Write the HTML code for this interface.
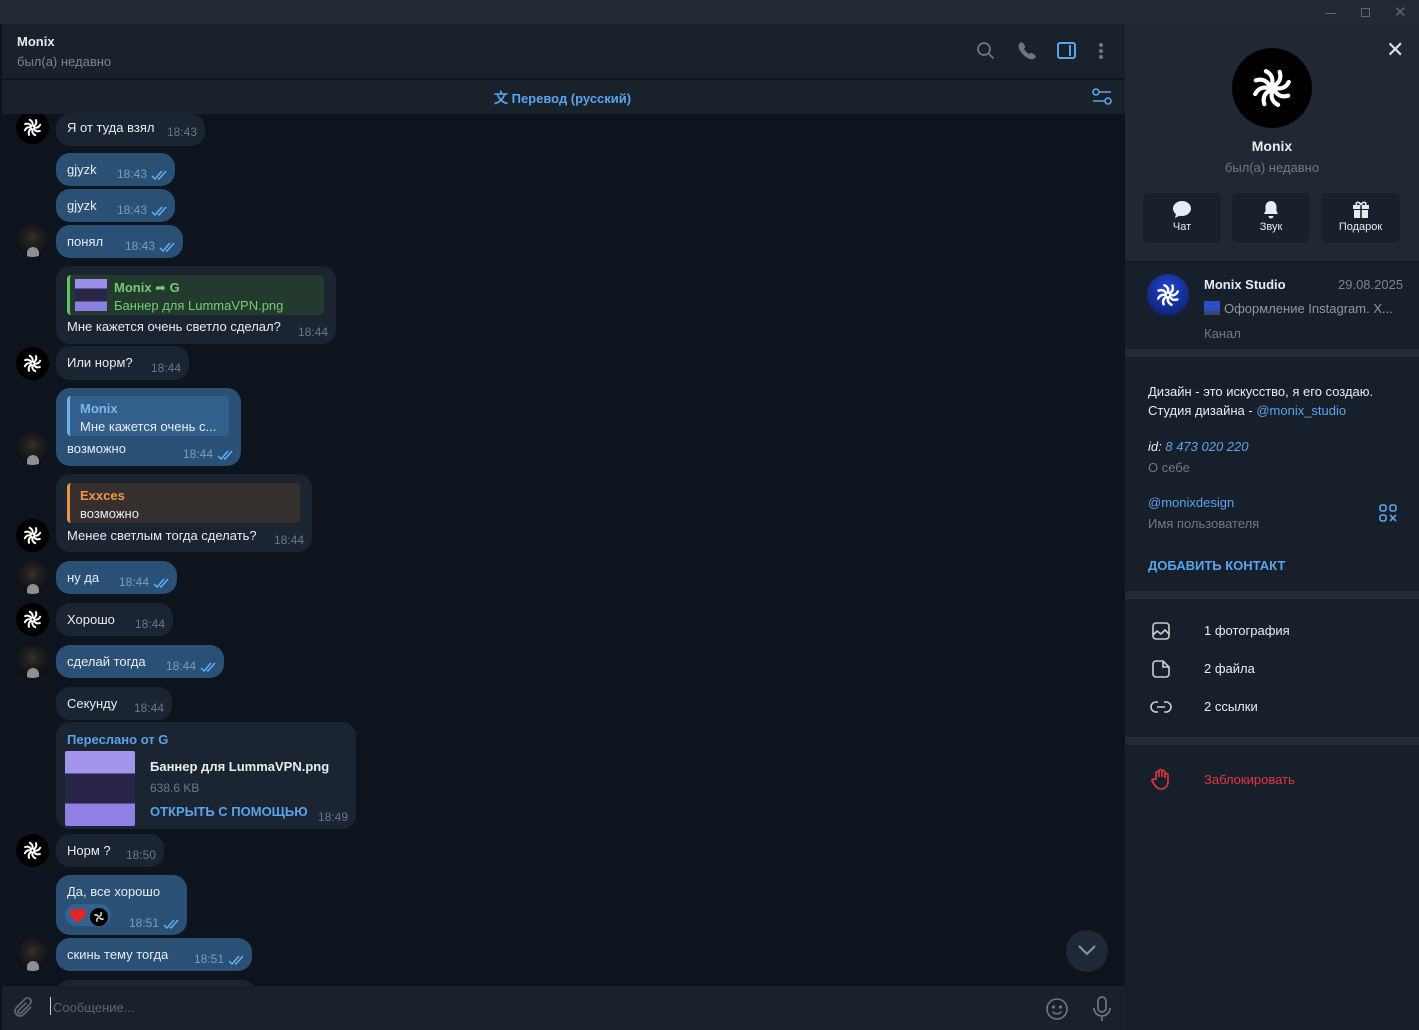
<!DOCTYPE html>
<html><head><meta charset="utf-8">
<style>
*{box-sizing:border-box;margin:0;padding:0}
body{width:1419px;height:1030px;overflow:hidden;background:#0e141d;font-family:"Liberation Sans","DejaVu Sans",sans-serif;font-size:13px;color:#e8ecf0;position:relative}
.abs{position:absolute}
.top{left:0;top:0;width:1419px;height:24px;background:#222a35}
.hdr{left:2px;top:24px;width:1123px;height:55px;background:#19212b;border-bottom:1px solid #111820}
.tr{left:2px;top:80px;width:1123px;height:34px;background:#19212b}
.chat{left:2px;top:114px;width:1123px;height:872px;background:#0e141d;overflow:hidden}
.inp{left:2px;top:986px;width:1123px;height:44px;background:#19212b}
.rp{left:1125px;top:24px;width:294px;height:1006px;background:#17202a}
.b{position:absolute;left:54px;border-radius:14px;padding:0 11px;line-height:16px;white-space:nowrap}
.in{background:#1b2431}
.out{background:#2b5075}
.t{font-size:12px;color:#6b7886;position:absolute;right:8px;bottom:4px}
.out .t{color:#7b9dbd;right:28px}
.ck{position:absolute;right:7px;bottom:6px}
.av{position:absolute;left:14px;width:33px;height:33px;border-radius:50%}
.mx{background:#000}
.ph{background:radial-gradient(circle at 50% 40%,#3a302b 0,#24211f 25%,#14181c 50%,#0c0f13 75%),#0c0f13;overflow:hidden}
.ph:after{content:"";position:absolute;left:11px;top:23px;width:12px;height:10px;border-radius:6px 6px 0 0;background:#8c9094}
.rq{border-radius:4px;padding:4px 8px 4px 10px;border-left:3px solid}
</style></head><body>
<div class="abs top">
<div class="abs" style="left:1325px;top:13px;width:11px;height:1px;background:#5e6874"></div>
<div class="abs" style="left:1361px;top:8px;width:9px;height:9px;border:1px solid #5e6874"></div>
<div class="abs" style="left:1394px;top:3px;color:#5e6874;font-size:15px">✕</div>
</div>
<div class="abs hdr">
<div class="abs" style="left:15px;top:10px;font-weight:bold;font-size:13px">Monix</div>
<div class="abs" style="left:15px;top:30px;color:#7a8591;font-size:13px">был(а) недавно</div>
<svg class="abs" style="left:974px;top:17px" width="20" height="20" viewBox="0 0 20 20" fill="none" stroke="#6d7782" stroke-width="1.8"><circle cx="8" cy="8" r="6"/><path d="M12.5 12.5l5 5"/></svg>
<svg class="abs" style="left:1015px;top:17px" width="20" height="20" viewBox="0 0 20 20"><path d="M3 2c1-1 2-1 3 0l2 3c.5 1 0 2-1 2.5 1 2.5 3 4.5 5.5 5.5.5-1 1.5-1.5 2.5-1l3 2c1 1 1 2 0 3-3 3-9 0-12.5-4S0 5 3 2z" fill="#6d7782"/></svg>
<div class="abs" style="left:1055px;top:18px;width:19px;height:17px;border:2px solid #5aa4ec;border-radius:3px"><div class="abs" style="right:3px;top:1px;width:2px;height:11px;background:#5aa4ec"></div></div>
<div class="abs" style="left:1097px;top:19px;width:4px;height:4px;border-radius:2px;background:#6d7782;box-shadow:0 6px 0 #6d7782,0 12px 0 #6d7782"></div>
</div>
<div class="abs tr">
<div class="abs" style="left:492px;top:8px;color:#5aa4ec;font-weight:bold;font-size:13px"><span style="font-size:14px">文</span> Перевод (русский)</div>
<svg class="abs" style="left:1089px;top:7px" width="22" height="20" viewBox="0 0 22 20" fill="none" stroke="#5aa4ec" stroke-width="1.6"><circle cx="5" cy="5" r="3"/><path d="M8 5h12M2 14h12"/><circle cx="17" cy="14" r="3"/></svg>
</div>

<div class="abs chat">
<div class="b in" style="top:0;height:32px;padding-top:6px;width:149px">Я от туда взял<span class="t" style="bottom:6px">18:43</span></div>
<div class="av mx" style="top:-3px"><svg width="33" height="33" viewBox="-19 -19 38 38"><g fill="none" stroke="#fff" stroke-width="2.3" stroke-linecap="round"><path d="M1.5 -1.5C4 -3 5 -5.5 4 -8.5"/><path d="M1.5 -1.5C4 -3 5 -5.5 4 -8.5" transform="rotate(45)"/><path d="M1.5 -1.5C4 -3 5 -5.5 4 -8.5" transform="rotate(90)"/><path d="M1.5 -1.5C4 -3 5 -5.5 4 -8.5" transform="rotate(135)"/><path d="M1.5 -1.5C4 -3 5 -5.5 4 -8.5" transform="rotate(180)"/><path d="M1.5 -1.5C4 -3 5 -5.5 4 -8.5" transform="rotate(225)"/><path d="M1.5 -1.5C4 -3 5 -5.5 4 -8.5" transform="rotate(270)"/><path d="M1.5 -1.5C4 -3 5 -5.5 4 -8.5" transform="rotate(315)"/></g></svg></div>
<div class="b out" style="top:39px;height:33px;padding-top:9px;width:119px">gjyzk<span class="t">18:43</span><svg class="ck" width="17" height="10" viewBox="0 0 17 10" fill="none" stroke="#5eb5f7" stroke-width="1.4"><path d="M1 6l3 3 7-8M7 8l1 1 7-8"/></svg></div>
<div class="b out" style="top:75px;height:33px;padding-top:9px;width:119px">gjyzk<span class="t">18:43</span><svg class="ck" width="17" height="10" viewBox="0 0 17 10" fill="none" stroke="#5eb5f7" stroke-width="1.4"><path d="M1 6l3 3 7-8M7 8l1 1 7-8"/></svg></div>
<div class="b out" style="top:111px;height:33px;padding-top:9px;width:127px">понял<span class="t">18:43</span><svg class="ck" width="17" height="10" viewBox="0 0 17 10" fill="none" stroke="#5eb5f7" stroke-width="1.4"><path d="M1 6l3 3 7-8M7 8l1 1 7-8"/></svg></div>
<div class="av ph" style="top:110px"></div>
<div class="b in" style="top:152px;height:78px;width:280px;padding-top:9px">
<div class="rq" style="border-color:#5fc563;background:#243a2e;height:40px;width:257px;position:relative;padding-left:44px;color:#6fd06f;line-height:18px">
<div class="abs" style="left:5px;top:4px;width:32px;height:32px;background:linear-gradient(#9c8ee8 0 30%,#2a2648 30% 70%,#8d7fe0 70%)"></div>
<b>Monix ➦ G</b><br>Баннер для LummaVPN.png</div>
<div style="margin-top:4px">Мне кажется очень светло сделал?</div><span class="t">18:44</span></div>
<div class="b in" style="top:232px;height:34px;padding-top:9px;width:133px">Или норм?<span class="t">18:44</span></div>
<div class="av mx" style="top:233px"><svg width="33" height="33" viewBox="-19 -19 38 38"><g fill="none" stroke="#fff" stroke-width="2.3" stroke-linecap="round"><path d="M1.5 -1.5C4 -3 5 -5.5 4 -8.5"/><path d="M1.5 -1.5C4 -3 5 -5.5 4 -8.5" transform="rotate(45)"/><path d="M1.5 -1.5C4 -3 5 -5.5 4 -8.5" transform="rotate(90)"/><path d="M1.5 -1.5C4 -3 5 -5.5 4 -8.5" transform="rotate(135)"/><path d="M1.5 -1.5C4 -3 5 -5.5 4 -8.5" transform="rotate(180)"/><path d="M1.5 -1.5C4 -3 5 -5.5 4 -8.5" transform="rotate(225)"/><path d="M1.5 -1.5C4 -3 5 -5.5 4 -8.5" transform="rotate(270)"/><path d="M1.5 -1.5C4 -3 5 -5.5 4 -8.5" transform="rotate(315)"/></g></svg></div>
<div class="b out" style="top:274px;height:78px;width:185px;padding-top:8px">
<div class="rq" style="border-color:#6ab3f0;background:#33608a;height:40px;width:162px;line-height:18px;color:#e8ecf0"><b style="color:#79b8ee">Monix</b><br>Мне кажется очень с...</div>
<div style="margin-top:5px">возможно</div><span class="t">18:44</span><svg class="ck" width="17" height="10" viewBox="0 0 17 10" fill="none" stroke="#5eb5f7" stroke-width="1.4"><path d="M1 6l3 3 7-8M7 8l1 1 7-8"/></svg></div>
<div class="av ph" style="top:318px"></div>
<div class="b in" style="top:360px;height:78px;width:256px;padding-top:9px">
<div class="rq" style="border-color:#e8924a;background:#35302d;height:40px;width:233px;line-height:18px"><b style="color:#f0954c">Exxces</b><br>возможно</div>
<div style="margin-top:5px">Менее светлым тогда сделать?</div><span class="t">18:44</span></div>
<div class="av mx" style="top:405px"><svg width="33" height="33" viewBox="-19 -19 38 38"><g fill="none" stroke="#fff" stroke-width="2.3" stroke-linecap="round"><path d="M1.5 -1.5C4 -3 5 -5.5 4 -8.5"/><path d="M1.5 -1.5C4 -3 5 -5.5 4 -8.5" transform="rotate(45)"/><path d="M1.5 -1.5C4 -3 5 -5.5 4 -8.5" transform="rotate(90)"/><path d="M1.5 -1.5C4 -3 5 -5.5 4 -8.5" transform="rotate(135)"/><path d="M1.5 -1.5C4 -3 5 -5.5 4 -8.5" transform="rotate(180)"/><path d="M1.5 -1.5C4 -3 5 -5.5 4 -8.5" transform="rotate(225)"/><path d="M1.5 -1.5C4 -3 5 -5.5 4 -8.5" transform="rotate(270)"/><path d="M1.5 -1.5C4 -3 5 -5.5 4 -8.5" transform="rotate(315)"/></g></svg></div>
<div class="b out" style="top:447px;height:33px;padding-top:9px;width:121px">ну да<span class="t">18:44</span><svg class="ck" width="17" height="10" viewBox="0 0 17 10" fill="none" stroke="#5eb5f7" stroke-width="1.4"><path d="M1 6l3 3 7-8M7 8l1 1 7-8"/></svg></div>
<div class="av ph" style="top:447px"></div>
<div class="b in" style="top:489px;height:33px;padding-top:9px;width:117px">Хорошо<span class="t">18:44</span></div>
<div class="av mx" style="top:489px"><svg width="33" height="33" viewBox="-19 -19 38 38"><g fill="none" stroke="#fff" stroke-width="2.3" stroke-linecap="round"><path d="M1.5 -1.5C4 -3 5 -5.5 4 -8.5"/><path d="M1.5 -1.5C4 -3 5 -5.5 4 -8.5" transform="rotate(45)"/><path d="M1.5 -1.5C4 -3 5 -5.5 4 -8.5" transform="rotate(90)"/><path d="M1.5 -1.5C4 -3 5 -5.5 4 -8.5" transform="rotate(135)"/><path d="M1.5 -1.5C4 -3 5 -5.5 4 -8.5" transform="rotate(180)"/><path d="M1.5 -1.5C4 -3 5 -5.5 4 -8.5" transform="rotate(225)"/><path d="M1.5 -1.5C4 -3 5 -5.5 4 -8.5" transform="rotate(270)"/><path d="M1.5 -1.5C4 -3 5 -5.5 4 -8.5" transform="rotate(315)"/></g></svg></div>
<div class="b out" style="top:531px;height:33px;padding-top:9px;width:168px">сделай тогда<span class="t">18:44</span><svg class="ck" width="17" height="10" viewBox="0 0 17 10" fill="none" stroke="#5eb5f7" stroke-width="1.4"><path d="M1 6l3 3 7-8M7 8l1 1 7-8"/></svg></div>
<div class="av ph" style="top:531px"></div>
<div class="b in" style="top:573px;height:33px;padding-top:9px;width:116px">Секунду<span class="t">18:44</span></div>
<div class="b in" style="top:608px;height:107px;width:300px;padding-top:10px">
<div style="color:#5aa4ec;font-weight:bold">Переслано от G</div>
<div class="abs" style="left:9px;top:29px;width:70px;height:75px;background:linear-gradient(#a395ea 0 30%,#272448 30% 70%,#8f80e6 70%);border-radius:2px"></div>
<div class="abs" style="left:94px;top:37px;font-weight:bold">Баннер для LummaVPN.png</div>
<div class="abs" style="left:94px;top:58px;color:#6b7886;font-size:12px">638.6 KB</div>
<div class="abs" style="left:94px;top:82px;color:#5aa4ec;font-weight:bold">ОТКРЫТЬ С ПОМОЩЬЮ</div>
<span class="t">18:49</span></div>
<div class="b in" style="top:720px;height:33px;padding-top:9px;width:108px">Норм ?<span class="t">18:50</span></div>
<div class="av mx" style="top:720px"><svg width="33" height="33" viewBox="-19 -19 38 38"><g fill="none" stroke="#fff" stroke-width="2.3" stroke-linecap="round"><path d="M1.5 -1.5C4 -3 5 -5.5 4 -8.5"/><path d="M1.5 -1.5C4 -3 5 -5.5 4 -8.5" transform="rotate(45)"/><path d="M1.5 -1.5C4 -3 5 -5.5 4 -8.5" transform="rotate(90)"/><path d="M1.5 -1.5C4 -3 5 -5.5 4 -8.5" transform="rotate(135)"/><path d="M1.5 -1.5C4 -3 5 -5.5 4 -8.5" transform="rotate(180)"/><path d="M1.5 -1.5C4 -3 5 -5.5 4 -8.5" transform="rotate(225)"/><path d="M1.5 -1.5C4 -3 5 -5.5 4 -8.5" transform="rotate(270)"/><path d="M1.5 -1.5C4 -3 5 -5.5 4 -8.5" transform="rotate(315)"/></g></svg></div>
<div class="b out" style="top:761px;height:60px;padding-top:9px;width:131px">Да, все хорошо
<div class="abs" style="left:9px;top:29px;width:46px;height:22px;border-radius:11px;background:#34628e"></div>
<svg class="abs" style="left:14px;top:34px" width="16" height="14" viewBox="0 0 16 14"><path d="M8 13.5C3 9.5 0 7 0 4A4 4 0 0 1 8 2.5 4 4 0 0 1 16 4c0 3-3 5.5-8 9.5z" fill="#e5242c"/></svg>
<div class="abs" style="left:34px;top:33px;width:18px;height:18px;border-radius:50%;background:#000"><svg width="18" height="18" viewBox="-18 -18 36 36"><g fill="none" stroke="#fff" stroke-width="2.6" stroke-linecap="round"><path d="M1.5 -1.5C4 -3 5 -5.5 4 -8.5"/><path d="M1.5 -1.5C4 -3 5 -5.5 4 -8.5" transform="rotate(90)"/><path d="M1.5 -1.5C4 -3 5 -5.5 4 -8.5" transform="rotate(180)"/><path d="M1.5 -1.5C4 -3 5 -5.5 4 -8.5" transform="rotate(270)"/></g></svg></div>
<span class="t">18:51</span><svg class="ck" width="17" height="10" viewBox="0 0 17 10" fill="none" stroke="#5eb5f7" stroke-width="1.4"><path d="M1 6l3 3 7-8M7 8l1 1 7-8"/></svg></div>
<div class="b out" style="top:824px;height:33px;padding-top:9px;width:196px">скинь тему тогда<span class="t">18:51</span><svg class="ck" width="17" height="10" viewBox="0 0 17 10" fill="none" stroke="#5eb5f7" stroke-width="1.4"><path d="M1 6l3 3 7-8M7 8l1 1 7-8"/></svg></div>
<div class="av ph" style="top:824px"></div>
<div class="b in" style="top:866px;height:33px;width:200px"></div>
<div class="abs" style="left:1064px;top:816px;width:42px;height:42px;border-radius:50%;background:#1f2935"><svg style="margin:13px 11px" width="20" height="14" viewBox="0 0 20 14" fill="none" stroke="#8b96a2" stroke-width="2"><path d="M2 3l8 8 8-8"/></svg></div>
</div>

<div class="abs inp">
<svg class="abs" style="left:10px;top:10px" width="24" height="24" viewBox="0 0 24 24" fill="none" stroke="#5c6672" stroke-width="1.8"><path d="M19 11l-8 8a5 5 0 0 1-7-7l9-9a3.3 3.3 0 0 1 5 5l-9 9a1.7 1.7 0 0 1-2.5-2.5l8-8"/></svg>
<div class="abs" style="left:48px;top:11px;width:1px;height:18px;background:#ccd"></div>
<div class="abs" style="left:51px;top:14px;color:#5c6672">Сообщение...</div>
<svg class="abs" style="left:1043px;top:11px" width="24" height="24" viewBox="0 0 24 24" fill="none" stroke="#6d7782" stroke-width="1.6"><circle cx="12" cy="12" r="10"/><circle cx="8.5" cy="10" r=".8" fill="#6d7782"/><circle cx="15.5" cy="10" r=".8" fill="#6d7782"/><path d="M7.5 14.5c2.5 3 6.5 3 9 0"/></svg>
<svg class="abs" style="left:1089px;top:9px" width="22" height="28" viewBox="0 0 22 28" fill="none" stroke="#6d7782" stroke-width="1.7"><rect x="7" y="2" width="8" height="15" rx="4"/><path d="M3 13a8 8 0 0 0 16 0M11 21v5"/></svg>
</div>

<div class="abs rp">
<div class="abs" style="left:0;top:0;width:294px;height:237px;background:#1f2833"></div>
<div class="abs" style="left:261px;top:14px;color:#dde2e7;font-size:22px;line-height:24px">✕</div>
<div class="abs" style="left:107px;top:24px;width:80px;height:80px;border-radius:50%;background:#000"><svg width="80" height="80" viewBox="-21 -21 42 42"><g fill="none" stroke="#fff" stroke-width="2.2" stroke-linecap="round"><path d="M1.5 -1.5C4 -3 5 -5.5 4 -8.5"/><path d="M1.5 -1.5C4 -3 5 -5.5 4 -8.5" transform="rotate(45)"/><path d="M1.5 -1.5C4 -3 5 -5.5 4 -8.5" transform="rotate(90)"/><path d="M1.5 -1.5C4 -3 5 -5.5 4 -8.5" transform="rotate(135)"/><path d="M1.5 -1.5C4 -3 5 -5.5 4 -8.5" transform="rotate(180)"/><path d="M1.5 -1.5C4 -3 5 -5.5 4 -8.5" transform="rotate(225)"/><path d="M1.5 -1.5C4 -3 5 -5.5 4 -8.5" transform="rotate(270)"/><path d="M1.5 -1.5C4 -3 5 -5.5 4 -8.5" transform="rotate(315)"/></g><circle r="1.2" fill="#fff"/></svg></div>
<div class="abs" style="left:0;width:294px;top:114px;text-align:center;font-weight:bold;font-size:14px">Monix</div>
<div class="abs" style="left:0;width:294px;top:136px;text-align:center;color:#6f7a86">был(а) недавно</div>
<div class="abs" style="left:18px;top:169px;width:78px;height:50px;border-radius:6px;background:#18212b;text-align:center;font-size:11px"><svg style="display:block;margin:7px auto 2px" width="20" height="19" viewBox="0 0 20 19"><path d="M10 1C5 1 1 4.5 1 8.5c0 2.3 1.2 4.3 3 5.6L3 18l4.5-2.3c.8.2 1.6.3 2.5.3 5 0 9-3.4 9-7.5S15 1 10 1z" fill="#e8ecf0"/></svg>Чат</div>
<div class="abs" style="left:107px;top:169px;width:78px;height:50px;border-radius:6px;background:#18212b;text-align:center;font-size:11px"><svg style="display:block;margin:7px auto 2px" width="18" height="19" viewBox="0 0 18 19"><path d="M9 1c-3.3 0-5.5 2.6-5.5 6v4L2 14h14l-1.5-3V7c0-3.4-2.2-6-5.5-6z" fill="#e8ecf0"/><path d="M6.5 16a2.5 2.5 0 0 0 5 0" fill="#e8ecf0"/></svg>Звук</div>
<div class="abs" style="left:196px;top:169px;width:79px;height:50px;border-radius:6px;background:#18212b;text-align:center;font-size:11px"><svg style="display:block;margin:7px auto 2px" width="18" height="19" viewBox="0 0 18 19" fill="#e8ecf0"><path d="M9 5C7 1 3 2 4.5 5M9 5c2-4 6-3 4.5 0" fill="none" stroke="#e8ecf0" stroke-width="1.6"/><rect x="1" y="5" width="7.2" height="4"/><rect x="9.8" y="5" width="7.2" height="4"/><rect x="2" y="10" width="6.2" height="8"/><rect x="9.8" y="10" width="6.2" height="8"/></svg>Подарок</div>
<div class="abs" style="left:0;top:237px;width:294px;height:2px;background:#121920"></div>
<div class="abs" style="left:22px;top:250px;width:42px;height:42px;border-radius:50%;background:radial-gradient(circle at 50% 35%,#2146d6,#081a5a)"><svg width="42" height="42" viewBox="-19 -19 38 38"><g fill="none" stroke="#fff" stroke-width="2.2" stroke-linecap="round"><path d="M1.5 -1.5C4 -3 5 -5.5 4 -8.5"/><path d="M1.5 -1.5C4 -3 5 -5.5 4 -8.5" transform="rotate(45)"/><path d="M1.5 -1.5C4 -3 5 -5.5 4 -8.5" transform="rotate(90)"/><path d="M1.5 -1.5C4 -3 5 -5.5 4 -8.5" transform="rotate(135)"/><path d="M1.5 -1.5C4 -3 5 -5.5 4 -8.5" transform="rotate(180)"/><path d="M1.5 -1.5C4 -3 5 -5.5 4 -8.5" transform="rotate(225)"/><path d="M1.5 -1.5C4 -3 5 -5.5 4 -8.5" transform="rotate(270)"/><path d="M1.5 -1.5C4 -3 5 -5.5 4 -8.5" transform="rotate(315)"/></g></svg></div>
<div class="abs" style="left:79px;top:253px;font-weight:bold">Monix Studio</div>
<div class="abs" style="left:213px;top:253px;color:#7a8591">29.08.2025</div>
<div class="abs" style="left:79px;top:277px;color:#8d98a4;white-space:nowrap"><span style="display:inline-block;width:16px;height:14px;background:linear-gradient(#2a4fc4 70%,#3a4660 70%);vertical-align:-2px;margin-right:4px"></span>Оформление Instagram. X...</div>
<div class="abs" style="left:79px;top:302px;color:#6f7a86">Канал</div>
<div class="abs" style="left:0;top:325px;width:294px;height:8px;background:#222b36"></div>
<div class="abs" style="left:23px;top:358px;line-height:19px">Дизайн - это искусство, я его создаю.<br>Студия дизайна - <span style="color:#5aa4ec">@monix_studio</span></div>
<div class="abs" style="left:23px;top:415px;font-style:italic"><span>id:</span> <span style="color:#5aa4ec">8 473 020 220</span></div>
<div class="abs" style="left:23px;top:436px;color:#6f7a86">О себе</div>
<div class="abs" style="left:23px;top:471px;color:#5aa4ec">@monixdesign</div>
<div class="abs" style="left:23px;top:492px;color:#6f7a86">Имя пользователя</div>
<svg class="abs" style="left:254px;top:480px" width="18" height="18" viewBox="0 0 18 18" fill="none" stroke="#5aa4ec" stroke-width="1.6"><rect x="1" y="1" width="6" height="6" rx="2"/><rect x="11" y="1" width="6" height="6" rx="2"/><rect x="1" y="11" width="6" height="6" rx="2"/><path d="M11 11l6 6M17 11l-6 6"/></svg>
<div class="abs" style="left:23px;top:534px;color:#5aa4ec;font-weight:bold">ДОБАВИТЬ КОНТАКТ</div>
<div class="abs" style="left:0;top:567px;width:294px;height:8px;background:#222b36"></div>
<svg class="abs" style="left:26px;top:597px" width="20" height="20" viewBox="0 0 20 20" fill="none" stroke="#c9ced4" stroke-width="1.6"><rect x="2" y="2" width="16" height="16" rx="3"/><path d="M2 14l4-4 4 3 4-4 4 4"/></svg>
<div class="abs" style="left:79px;top:599px">1 фотография</div>
<svg class="abs" style="left:26px;top:635px" width="20" height="20" viewBox="0 0 20 20" fill="none" stroke="#c9ced4" stroke-width="1.6"><path d="M5 2h7l6 6v7a3 3 0 0 1-3 3H5a3 3 0 0 1-3-3V5a3 3 0 0 1 3-3zM12 2v6h6"/></svg>
<div class="abs" style="left:79px;top:637px">2 файла</div>
<svg class="abs" style="left:25px;top:673px" width="22" height="20" viewBox="0 0 22 20" fill="none" stroke="#c9ced4" stroke-width="1.6"><path d="M8 5H6a5 5 0 0 0 0 10h2M14 5h2a5 5 0 0 1 0 10h-2M7 10h8"/></svg>
<div class="abs" style="left:79px;top:675px">2 ссылки</div>
<div class="abs" style="left:0;top:713px;width:294px;height:8px;background:#222b36"></div>
<svg class="abs" style="left:26px;top:744px" width="20" height="22" viewBox="0 0 20 22" fill="none" stroke="#e5343c" stroke-width="1.6"><path d="M5 11V5a1.5 1.5 0 0 1 3 0v4V3a1.5 1.5 0 0 1 3 0v6V4a1.5 1.5 0 0 1 3 0v6-3a1.5 1.5 0 0 1 3 0v7a7 7 0 0 1-7 7c-3 0-5-2-7-5l-2-3a1.5 1.5 0 0 1 2.5-1.5z"/></svg>
<div class="abs" style="left:79px;top:748px;color:#e5343c">Заблокировать</div>
</div>
</body></html>
